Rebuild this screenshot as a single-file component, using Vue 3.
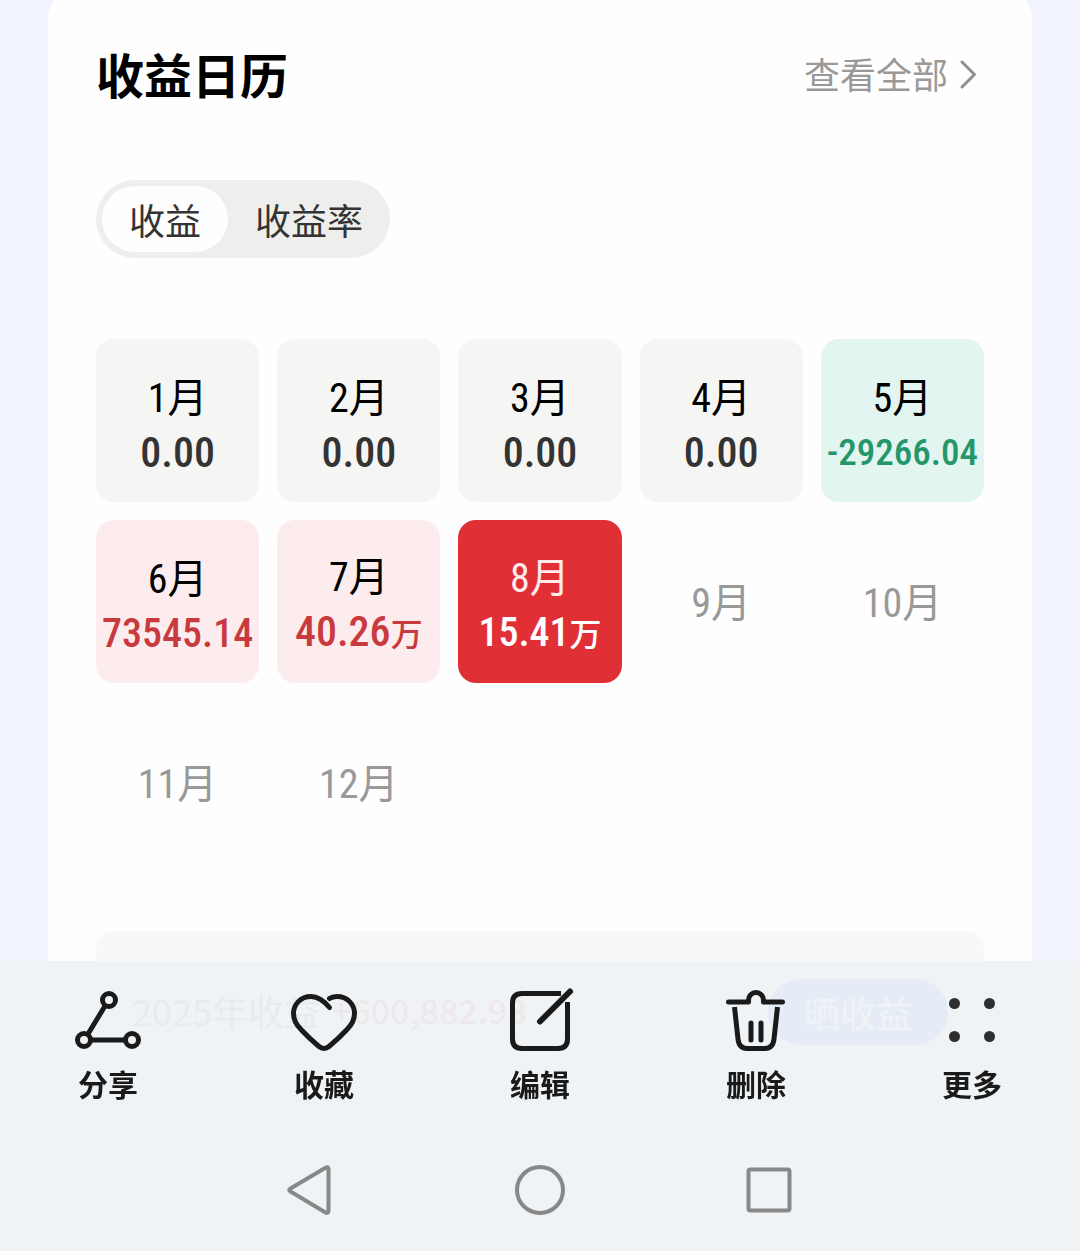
<template>
  <main class="page">
    <section class="card">
      <header class="card-head">
        <h1 class="title">收益日历</h1>
        <a class="more" href="#all">
          查看全部
          <svg class="chevron" viewBox="0 0 36 36" aria-hidden="true">
            <path d="M14 7 L26.500 19.500 L14 32" />
          </svg>
        </a>
      </header>

      <div class="tabs">
        <button
          v-for="tab in tabs"
          :key="tab"
          type="button"
          class="tab"
          :class="{ active: tab === current }"
          :aria-pressed="tab === current"
          @click="current = tab">
          {{ tab }}
        </button>
      </div>

      <ul class="months">
        <li v-for="(item, index) in months" :key="index" class="month" :class="item.type">
          <span class="month-name">{{ index + 1 }}月</span>
          <span v-if="item.value" class="month-value" :class="item.size">
            {{ item.value }}<span v-if="item.unit" class="unit">{{ item.unit }}</span>
          </span>
        </li>
      </ul>

      <div class="summary">
        <p class="summary-text">2025年收益 <strong class="summary-value">+600,882.98</strong></p>
        <button type="button" class="show-off">晒收益</button>
      </div>
    </section>

    <footer class="bottom">
      <div class="toolbar">
        <button type="button" class="tool">
          <svg class="tool-icon" viewBox="0 0 72 72" aria-hidden="true">
            <circle cx="37" cy="16" r="6.500" />
            <circle cx="12" cy="56" r="6.500" />
            <circle cx="60" cy="56" r="6.500" />
            <path d="M33 22 L16 50 M19 56 H53" />
          </svg>
          分享
        </button>
        <button type="button" class="tool">
          <svg class="tool-icon" viewBox="0 0 72 72" aria-hidden="true">
            <path d="M41.500 23.500 C36 17 30 12.500 23 12.500 C12.500 12.500 5.500 20.500 5.500 29.500 C5.500 35.500 8.500 41 13 45.500 C19 52 25 57.500 31 62.500 C34 65 38 65 41 62.500 C47 57.500 53 52 59 45.500 C63.500 41 66.500 35.500 66.500 29.500 C66.500 20.500 59.500 12.500 49 12.500 C46 12.500 43.500 13 41.500 14.500" />
          </svg>
          收藏
        </button>
        <button type="button" class="tool">
          <svg class="tool-icon" viewBox="0 0 72 72" aria-hidden="true">
            <path class="butt" d="M57 9.500 H18 Q8.500 9.500 8.500 19 V55 Q8.500 64.500 18 64.500 H54 Q63.500 64.500 63.500 55 V18" />
            <path class="pen" d="M36 37.500 L66 7.500" />
          </svg>
          编辑
        </button>
        <button type="button" class="tool">
          <svg class="tool-icon" viewBox="0 0 72 72" aria-hidden="true">
            <path d="M8.500 18 H28.500 V16 A7.500 7.500 0 0 1 43.500 16 V18 H62.500" />
            <path class="butt" d="M14.500 23 L18 55 Q19 64.500 27 64.500 H45 Q53 64.500 54 55 L57.500 23" />
            <path d="M31 39 V56 M41 39 V56" />
          </svg>
          删除
        </button>
        <button type="button" class="tool">
          <svg class="tool-icon dots" viewBox="0 0 72 72" aria-hidden="true">
            <circle cx="18.500" cy="19.500" r="5.500" />
            <circle cx="53.500" cy="19.500" r="5.500" />
            <circle cx="18.500" cy="52.500" r="5.500" />
            <circle cx="53.500" cy="52.500" r="5.500" />
          </svg>
          更多
        </button>
      </div>

      <nav class="system-nav">
        <button type="button" class="nav-btn" aria-label="返回">
          <svg class="nav-icon" viewBox="0 0 60 60" aria-hidden="true">
            <path d="M45.500 7.700 L10.500 28.500 Q8 30 10.500 31.500 L45.500 52.500 Q48.500 53.500 48.500 51 V9 Q48.500 6.500 45.500 7.700 Z" />
          </svg>
        </button>
        <button type="button" class="nav-btn" aria-label="主页">
          <svg class="nav-icon" viewBox="0 0 60 60" aria-hidden="true">
            <circle cx="30" cy="30" r="23" />
          </svg>
        </button>
        <button type="button" class="nav-btn" aria-label="最近任务">
          <svg class="nav-icon" viewBox="0 0 60 60" aria-hidden="true">
            <rect x="8.500" y="9.500" width="41" height="41" rx="2" />
          </svg>
        </button>
      </nav>
    </footer>
  </main>
</template>

<script setup>
import { ref } from 'vue';

const tabs = ['收益', '收益率'];
const current = ref('收益');

const months = [
  { value: '0.00', type: 'flat' },
  { value: '0.00', type: 'flat' },
  { value: '0.00', type: 'flat' },
  { value: '0.00', type: 'flat' },
  { value: '-29266.04', type: 'loss', size: 'small' },
  { value: '73545.14', type: 'gain', size: 'medium' },
  { value: '40.26', unit: '万', type: 'gain' },
  { value: '15.41', unit: '万', type: 'selected', size: 'medium' },
  { type: 'empty' },
  { type: 'empty' },
  { type: 'empty' },
  { type: 'empty' },
];
</script>

<style>
body {
  margin: 0;
  background: #f1f4fe;
}
</style>

<style scoped>
.page {
  box-sizing: border-box;
  min-height: 100vh;
  display: flex;
  padding: 0 48px;
  overflow: hidden;
  font-family: "Noto Sans CJK SC", sans-serif;
  color: #000;
}

button {
  border: 0;
  padding: 0;
  background: none;
  font-family: inherit;
  cursor: pointer;
}

.card {
  flex: 1;
  box-sizing: border-box;
  margin-top: -12px;
  padding: 51px 48px 0;
  border-radius: 32px 32px 0 0;
  background: #fefefe;
}

.card-head {
  display: flex;
  align-items: center;
  justify-content: space-between;
}

.title {
  margin: 0;
  font-size: 48px;
  font-weight: 700;
  line-height: 68px;
}

.more {
  display: flex;
  align-items: center;
  font-size: 36px;
  line-height: 68px;
  color: #999;
  text-decoration: none;
}

.chevron {
  width: 36px;
  height: 36px;
  fill: none;
  stroke: #8f8f94;
  stroke-width: 3;
  stroke-linecap: round;
  stroke-linejoin: round;
}

.tabs {
  display: inline-flex;
  margin-top: 73px;
  padding: 6px 0 6px 6px;
  border-radius: 39px;
  background: #eeeeed;
}

.tab {
  padding: 0 27px;
  border-radius: 33px;
  font-size: 36px;
  line-height: 66px;
  color: #333;
}

.tab.active {
  background: #fefefe;
}

.months {
  display: grid;
  grid-template-columns: repeat(5, 1fr);
  gap: 18px;
  margin: 81px 0 0;
  padding: 0;
  list-style: none;
}

.month {
  box-sizing: border-box;
  aspect-ratio: 1;
  min-width: 0;
  display: flex;
  flex-direction: column;
  align-items: center;
  justify-content: center;
  padding-top: 10px;
  border-radius: 18px;
  font-family: "Roboto Condensed", "Noto Sans CJK SC", sans-serif;
  white-space: nowrap;
}

.month-name {
  font-size: 40px;
  line-height: 54px;
}

.month-value {
  font-size: 42px;
  font-weight: 500;
  line-height: 54px;
}

.month-value.medium {
  font-size: 40px;
}

.month-value.small {
  font-size: 37px;
}

.unit {
  font-size: 32px;
}

.flat {
  background: #f5f5f4;
}

.flat .month-value {
  color: #333;
}

.loss {
  background: #e2f5f0;
}

.loss .month-value {
  color: #23966a;
}

.gain {
  background: #fdecee;
}

.gain .month-value {
  color: #c93a3e;
}

.selected {
  background: #e03036;
  color: #fff;
}

.selected .month-name {
  color: #ffeaec;
}

.empty {
  padding-top: 4px;
  color: #999;
}

.summary {
  box-sizing: border-box;
  display: flex;
  align-items: flex-start;
  justify-content: space-between;
  margin-top: 66px;
  padding: 48px 36px;
  border-radius: 18px;
  background: #f8f8f7;
}

.summary-text {
  display: flex;
  gap: 12px;
  margin: 0;
  font-size: 36px;
  line-height: 62px;
  color: #666;
}

.summary-value {
  font-size: 34px;
  font-weight: 500;
  color: #e03036;
}

.show-off {
  padding: 0 36px;
  border-radius: 33px;
  background: #4a78e8;
  font-size: 36px;
  line-height: 66px;
  color: #fff;
}

.bottom {
  position: fixed;
  right: 0;
  bottom: 0;
  left: 0;
}

.toolbar {
  display: grid;
  grid-template-columns: repeat(5, 1fr);
  padding: 23px 0 27px;
  background: rgba(238, 242, 246, 0.95);
}

.tool {
  display: flex;
  flex-direction: column;
  align-items: center;
  gap: 7px;
  font-size: 30px;
  font-weight: 700;
  line-height: 40px;
  color: #1a1a1a;
}

.tool-icon {
  width: 72px;
  height: 72px;
  fill: none;
  stroke: #1a1a1a;
  stroke-width: 5;
  stroke-linecap: round;
  stroke-linejoin: round;
}

.tool-icon .butt {
  stroke-linecap: butt;
}

.tool-icon .pen {
  stroke-width: 6;
}

.tool-icon.dots {
  fill: #2e2e2e;
  stroke: none;
}

.system-nav {
  display: flex;
  justify-content: center;
  gap: 170px;
  padding: 30px 0 31px;
  background: #eff3f6;
}

.nav-btn {
  display: flex;
}

.nav-icon {
  width: 60px;
  height: 60px;
  fill: none;
  stroke: #888;
  stroke-width: 4;
  stroke-linejoin: round;
}
</style>
